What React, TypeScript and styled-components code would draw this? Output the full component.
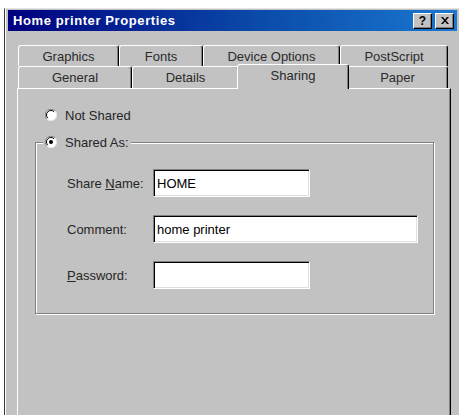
import React from 'react';
import styled, { createGlobalStyle } from 'styled-components';

type Tab = {
  label: string;
  width: number;
  active?: boolean;
};

const backTabs: Tab[] = [
  { label: 'Graphics', width: 101 },
  { label: 'Fonts', width: 84 },
  { label: 'Device Options', width: 137 },
  { label: 'PostScript', width: 108 },
];

const frontTabs: Tab[] = [
  { label: 'General', width: 114 },
  { label: 'Details', width: 107 },
  { label: 'Sharing', width: 108, active: true },
  { label: 'Paper', width: 101 },
];

function Radio({ checked }: { checked?: boolean }) {
  return (
    <svg width="12" height="12" viewBox="0 0 12 12">
      <circle cx="6" cy="6" r="5.5" fill="#fff" />
      <path d="M1.9 10.1 A5.5 5.5 0 0 1 10.1 1.9" stroke="#808080" fill="none" />
      <path d="M2.8 9.2 A4.5 4.5 0 0 1 9.2 2.8" stroke="#000" fill="none" />
      <path d="M10.1 1.9 A5.5 5.5 0 0 1 1.9 10.1" stroke="#e8e8e8" fill="none" />
      {checked && <circle cx="6" cy="6" r="2" fill="#000" />}
    </svg>
  );
}

export default function App() {
  return (
    <>
      <GlobalStyle />
      <StyledWindow>
        <StyledTitleBar>
          <span className="title">Home printer Properties</span>
          <div className="buttons">
            <StyledTitleButton>?</StyledTitleButton>
            <StyledTitleButton>
              <svg width="8" height="7" viewBox="0 0 8 7">
                <path d="M0 0h2l2 2.5L6 0h2L5 3.5 8 7H6L4 4.5 2 7H0l3-3.5z" fill="#000" />
              </svg>
            </StyledTitleButton>
          </div>
        </StyledTitleBar>

        <StyledBody>
          <StyledTabRow $h={21}>
            {backTabs.map((tab) => (
              <StyledTab key={tab.label} $w={tab.width} $h={21}>
                {tab.label}
              </StyledTab>
            ))}
          </StyledTabRow>
          <StyledTabRow $h={22}>
            {frontTabs.map((tab) => (
              <StyledTab key={tab.label} $w={tab.width} $h={22} $active={tab.active}>
                {tab.label}
              </StyledTab>
            ))}
          </StyledTabRow>

          <StyledPanel>
            <StyledRadioRow>
              <Radio />
              <span>Not Shared</span>
            </StyledRadioRow>

            <StyledGroup>
              <legend>
                <Radio checked />
                <span>Shared As:</span>
              </legend>

              <StyledFieldRow>
                <label>
                  Share <u>N</u>ame:
                </label>
                <StyledInput $w={157} defaultValue="HOME" />
              </StyledFieldRow>
              <StyledFieldRow>
                <label>Comment:</label>
                <StyledInput $w={265} defaultValue="home printer" />
              </StyledFieldRow>
              <StyledFieldRow>
                <label>
                  <u>P</u>assword:
                </label>
                <StyledInput $w={157} type="password" defaultValue="" />
              </StyledFieldRow>
            </StyledGroup>
          </StyledPanel>
        </StyledBody>
      </StyledWindow>
    </>
  );
}

const GlobalStyle = createGlobalStyle`
  html, body {
    margin: 0;
    background: #ffffff;
    overflow: hidden;
  }
  body {
    font-family: 'Liberation Sans', Arial, sans-serif;
    font-size: 13px;
    color: #262626;
  }
`;

const StyledWindow = styled.div`
  box-sizing: border-box;
  width: 455px;
  height: 407px;
  margin: 8px 0 0 4px;
  padding: 1px 0 0 3px;
  display: flex;
  flex-direction: column;
  background: #c2c2c2;
  border-left: 1px solid #3a3a3a;
  border-top: 1px solid #e4e4e4;
  box-shadow: inset 1px 0 0 #ffffff;
`;

const StyledTitleBar = styled.div`
  height: 21px;
  margin-right: 2px;
  padding: 0 3px 0 5px;
  display: flex;
  align-items: center;
  justify-content: space-between;
  background: linear-gradient(90deg, #000080 0%, #0a4aa8 55%, #1a78d0 100%);

  .title {
    color: #ffffff;
    font-weight: 700;
    font-size: 13px;
    letter-spacing: 0.6px;
  }

  .buttons {
    display: flex;
    gap: 3px;
  }
`;

const StyledTitleButton = styled.div`
  box-sizing: border-box;
  width: 19px;
  height: 16px;
  display: flex;
  align-items: center;
  justify-content: center;
  background: #c2c2c2;
  border-top: 1px solid #ffffff;
  border-left: 1px solid #ffffff;
  border-right: 1px solid #000000;
  border-bottom: 1px solid #000000;
  box-shadow: inset -1px -1px 0 #808080;
  font-weight: 700;
  font-size: 12px;
  color: #000;
`;

const StyledBody = styled.div`
  flex: 1;
  padding: 14px 8px 0 9px;
  display: flex;
  flex-direction: column;
`;

const StyledTabRow = styled.div<{ $h: number }>`
  display: flex;
  height: ${(p) => p.$h}px;
  padding-left: 1px;
`;

const StyledTab = styled.div<{ $w: number; $h: number; $active?: boolean }>`
  box-sizing: border-box;
  position: relative;
  flex: none;
  width: ${(p) => p.$w + (p.$active ? 4 : 0)}px;
  height: ${(p) => p.$h + (p.$active ? 3 : 0)}px;
  margin: ${(p) => (p.$active ? '-2px -2px 0 -2px' : '0')};
  z-index: ${(p) => (p.$active ? 2 : 0)};
  display: flex;
  align-items: center;
  justify-content: center;
  padding-bottom: ${(p) => (p.$active ? 3 : 0)}px;
  background: #c2c2c2;
  border-top: 1px solid #ffffff;
  border-left: 1px solid #ffffff;
  border-right: 1px solid #000000;
  border-radius: 3px 3px 0 0;
  box-shadow: inset -1px 0 0 #808080;
  color: #2a2a2a;
  white-space: nowrap;
`;

const StyledPanel = styled.div`
  position: relative;
  z-index: 1;
  flex: 1;
  padding: 18px 16px 0 17px;
  background: #c2c2c2;
  border-top: 1px solid #ffffff;
  border-left: 1px solid #ffffff;
  border-right: 1px solid #000000;
  box-shadow: inset -1px 0 0 #808080;
`;

const StyledRadioRow = styled.div`
  height: 16px;
  padding-left: 10px;
  display: flex;
  align-items: center;
  gap: 8px;
`;

const StyledGroup = styled.fieldset`
  box-sizing: border-box;
  width: 399px;
  min-width: 0;
  margin: 11px 0 0 0;
  padding: 19px 0 24px 0;
  border: 1px solid #808080;
  box-shadow: 1px 1px 0 #ffffff, inset 1px 1px 0 #ffffff;

  legend {
    height: 16px;
    margin-left: 7px;
    padding: 0 2px;
    display: flex;
    align-items: center;
    gap: 8px;
    background: #c2c2c2;
  }
`;

const StyledFieldRow = styled.div`
  height: 28px;
  padding-left: 31px;
  display: flex;
  align-items: center;

  & + & {
    margin-top: 18px;
  }

  label {
    width: 86px;
    flex: none;
  }
`;

const StyledInput = styled.input<{ $w: number }>`
  box-sizing: border-box;
  width: ${(p) => p.$w}px;
  height: 28px;
  padding: 0 0 0 3px;
  font-family: 'Liberation Sans', Arial, sans-serif;
  font-size: 13px;
  color: #000;
  background: #ffffff;
  border: none;
  border-top: 1px solid #808080;
  border-left: 1px solid #808080;
  border-right: 1px solid #ffffff;
  border-bottom: 1px solid #ffffff;
  box-shadow: inset 1px 1px 0 #000000, inset -1px -1px 0 #dfdfdf;
  outline: none;
`;
